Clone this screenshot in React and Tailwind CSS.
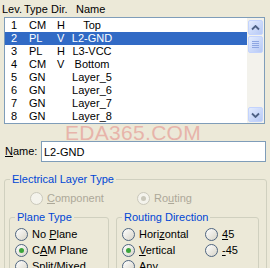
import React from "react";

const layers = [
  { lev: 1, type: "CM", dir: "H", name: "Top" },
  { lev: 2, type: "PL", dir: "V", name: "L2-GND" },
  { lev: 3, type: "PL", dir: "H", name: "L3-VCC" },
  { lev: 4, type: "CM", dir: "V", name: "Bottom" },
  { lev: 5, type: "GN", dir: "", name: "Layer_5" },
  { lev: 6, type: "GN", dir: "", name: "Layer_6" },
  { lev: 7, type: "GN", dir: "", name: "Layer_7" },
  { lev: 8, type: "GN", dir: "", name: "Layer_8" },
];

function Radio({ checked, disabled }) {
  return (
    <span
      className={`w-[13px] h-[13px] rounded-full border flex items-center justify-center shrink-0 ${
        disabled ? "border-[#cac8bb] bg-[#f4f3ec]" : "border-[#4f6580] bg-gradient-to-br from-white to-[#d8d5c9]"
      }`}
    >
      {checked && (
        <span className={`w-[5px] h-[5px] rounded-full ${disabled ? "bg-[#cac8bb]" : "bg-[#3aa43a]"}`} />
      )}
    </span>
  );
}

function Option({ checked, disabled, children, width }) {
  return (
    <div className={`flex items-center gap-[4px] h-[13px] ${width || ""}`}>
      <Radio checked={checked} disabled={disabled} />
      <span className={disabled ? "text-[#aca899]" : ""}>{children}</span>
    </div>
  );
}

function ScrollBtn({ down }) {
  return (
    <div className="w-[15px] h-[15px] mx-auto rounded-[2px] border border-[#c3d3fd] bg-gradient-to-br from-[#e3ecff] to-[#b7c9f5] flex items-center justify-center">
      <svg width="9" height="6" viewBox="0 0 9 6">
        <path
          d={down ? "M1 1.5 L4.5 5 L8 1.5" : "M1 4.5 L4.5 1 L8 4.5"}
          fill="none"
          stroke="#4d6185"
          strokeWidth="1.8"
        />
      </svg>
    </div>
  );
}

export default function App() {
  return (
    <div className="relative w-[270px] h-[268px] overflow-hidden bg-[#ece9d8] text-black text-[11px] leading-[13px] font-['Liberation_Sans',Arial,sans-serif]">
      {/* column header */}
      <div className="h-[17px] pt-[3px] pl-[2px] flex">
        <span className="w-[22px]">Lev.</span>
        <span className="w-[27px]">Type</span>
        <span className="w-[25px]">Dir.</span>
        <span>Name</span>
      </div>

      {/* layer list */}
      <div className="ml-[4px] w-[261px] h-[107px] border border-[#7f9db9] bg-white flex">
        <div className="flex-1 pt-[1px]">
          {layers.map((l) => (
            <div
              key={l.lev}
              className={`flex h-[13px] ${l.lev === 2 ? "bg-[#316ac5] text-white" : ""}`}
            >
              <span className="w-[24px] pl-[6px]">{l.lev}</span>
              <span className="w-[28px]">{l.type}</span>
              <span className="w-[13px]">{l.dir}</span>
              <span className="w-[44px] text-center whitespace-nowrap">{l.name}</span>
            </div>
          ))}
        </div>
        <div className="w-[17px] bg-[#f3f2ec] flex flex-col pt-[2px] pb-[1px]">
          <ScrollBtn />
          <div className="mt-[1px] w-[15px] h-[17px] mx-auto rounded-[2px] border border-[#c3d3fd] bg-gradient-to-br from-[#e3ecff] to-[#b7c9f5] flex flex-col items-center justify-center gap-[1px]">
            <span className="w-[7px] h-[1px] bg-[#8ea6e2]" />
            <span className="w-[7px] h-[1px] bg-[#8ea6e2]" />
            <span className="w-[7px] h-[1px] bg-[#8ea6e2]" />
            <span className="w-[7px] h-[1px] bg-[#8ea6e2]" />
          </div>
          <div className="flex-1" />
          <ScrollBtn down />
        </div>
      </div>

      {/* name */}
      <div className="mt-[17px] flex items-center h-[21px]">
        <span className="w-[41px] pl-[5px]">
          <u>N</u>ame:
        </span>
        <input
          readOnly
          value="L2-GND"
          className="w-[225px] h-[21px] border border-[#7f9db9] bg-white pl-[2px] outline-none"
        />
      </div>

      {/* electrical layer type */}
      <fieldset className="mt-[11px] ml-[4px] w-[263px] border border-[#d0d0bf] rounded-[3px] h-[120px]">
        <legend className="ml-[5px] px-[2px] text-[#0046d5]">Electrical Layer Type</legend>
        <div className="mt-[6px] ml-[25px] flex">
          <Option disabled width="w-[107px]">
            <u>C</u>omponent
          </Option>
          <Option disabled checked>
            Ro<u>u</u>ting
          </Option>
        </div>

        <div className="mt-[6px] ml-[4px] flex">
          <fieldset className="w-[100px] h-[80px] border border-[#d0d0bf] rounded-[3px]">
            <legend className="ml-[5px] px-[2px] text-[#0046d5]">Plane Type</legend>
            <div className="mt-[4px] ml-[5px] flex flex-col gap-[3px]">
              <Option>
                No <u>P</u>lane
              </Option>
              <Option checked>
                C<u>A</u>M Plane
              </Option>
              <Option>
                <u>S</u>plit/Mixed
              </Option>
            </div>
          </fieldset>
          <fieldset className="ml-[7px] w-[143px] h-[80px] border border-[#d0d0bf] rounded-[3px]">
            <legend className="ml-[5px] px-[2px] text-[#0046d5]">Routing Direction</legend>
            <div className="mt-[4px] ml-[5px] flex flex-col gap-[3px]">
              <div className="flex">
                <Option width="w-[83px]">
                  Hori<u>z</u>ontal
                </Option>
                <Option>
                  <u>4</u>5
                </Option>
              </div>
              <div className="flex">
                <Option checked width="w-[83px]">
                  <u>V</u>ertical
                </Option>
                <Option>
                  <u>-</u>45
                </Option>
              </div>
              <Option>
                A<u>n</u>y
              </Option>
            </div>
          </fieldset>
        </div>
      </fieldset>

      {/* watermark */}
      <div className="absolute left-[65px] top-[121px] text-[21px] leading-[24px] tracking-[0.3px] text-[#e48a86] opacity-55 pointer-events-none">
        EDA365.COM
      </div>
    </div>
  );
}
